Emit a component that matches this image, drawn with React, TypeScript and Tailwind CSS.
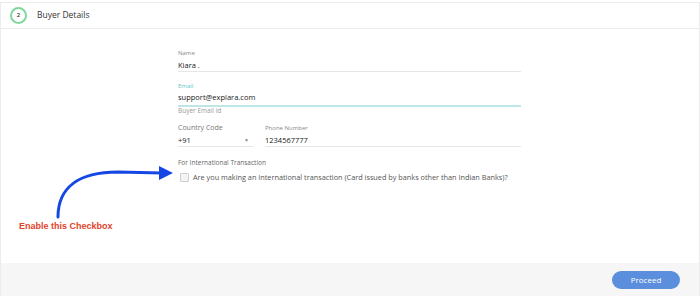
import React from 'react';

const sans = { fontFamily: '"Open Sans", "Noto Sans", sans-serif' };

function Field({
  label,
  value,
  labelClass = 'text-[6px] text-[#8a8a8a]',
  children,
}: {
  label: string;
  value: string;
  labelClass?: string;
  children?: React.ReactNode;
}) {
  return (
    <div>
      <div className={`leading-[8px] ${labelClass}`}>{label}</div>
      <div className="mt-[1px] flex h-[14px] items-center justify-between border-b border-[#e6e6e6]">
        <span className="text-[7.5px] leading-[12px] text-[#222]">{value}</span>
        {children}
      </div>
    </div>
  );
}

export default function App() {
  return (
    <div className="relative h-[296px] w-[700px] bg-white pt-[2px]" style={sans}>
      <div className="flex h-[294px] flex-col border-x border-t border-[#ececec]">
        {/* header */}
        <div className="flex h-[26px] items-center border-b border-[#ececec] pl-[9px]">
          <div className="flex h-[17px] w-[17px] items-center justify-center rounded-full border-2 border-[#7fd79c] text-[6px] font-semibold text-[#333]">
            2
          </div>
          <span className="ml-[10px] text-[8.5px] text-[#333]">Buyer Details</span>
        </div>

        {/* body */}
        <div className="flex-1">
          <div className="ml-[177px] w-[343px] pt-[20px]">
            <Field label="Name" value="Kiara ." />

            <div className="mt-[10px]">
              <div className="text-[6px] leading-[8px] text-[#5ec7c4]">Email</div>
              <div className="mt-[1px] flex h-[16px] items-start border-b-2 border-[#bde7e6]">
                <span className="text-[7.5px] leading-[12px] text-[#222]">support@explara.com</span>
              </div>
              <div className="text-[6.5px] leading-[8px] text-[#999]">Buyer Email id</div>
            </div>

            <div className="mt-[9px] flex gap-[12px]">
              <div className="w-[75px]">
                <Field label="Country Code" value="+91" labelClass="text-[7px] text-[#777]">
                  <span className="mr-[4px] text-[5px] leading-[8px] text-[#888]">▼</span>
                </Field>
              </div>
              <div className="flex-1">
                <Field label="Phone Number" value="1234567777" />
              </div>
            </div>

            <div className="mt-[12px] text-[6.5px] leading-[8px] text-[#666]">
              For International Transaction
            </div>
            <label className="mt-[5px] flex items-center">
              <span className="ml-[2px] h-[9px] w-[9px] rounded-[1px] border border-[#cfcfcf] bg-[#f4f4f4]" />
              <span className="ml-[4px] text-[7.3px] leading-[10px] text-[#555]">
                Are you making an International transaction (Card issued by banks other than Indian Banks)?
              </span>
            </label>
          </div>
        </div>

        {/* footer */}
        <div className="flex h-[33px] items-center justify-end bg-[#f6f6f7] pr-[19px]">
          <button className="h-[18px] w-[68px] rounded-full bg-[#5b8fdd] text-[8px] text-white">
            Proceed
          </button>
        </div>
      </div>

      {/* annotation */}
      <svg className="absolute left-0 top-0" width="200" height="240" viewBox="0 0 200 240">
        <path
          d="M58 217 C58 188 78 172 118 172 L162 173"
          fill="none"
          stroke="#1646e4"
          strokeWidth="3"
          strokeLinecap="round"
        />
        <polygon points="159,166 173,173 159,180" fill="#1646e4" />
      </svg>
      <div
        className="absolute left-[19px] top-[220px] text-[9px] font-bold leading-[12px] text-[#e2432c]"
        style={{ fontFamily: '"Liberation Sans", Arial, sans-serif' }}
      >
        Enable this Checkbox
      </div>
    </div>
  );
}
